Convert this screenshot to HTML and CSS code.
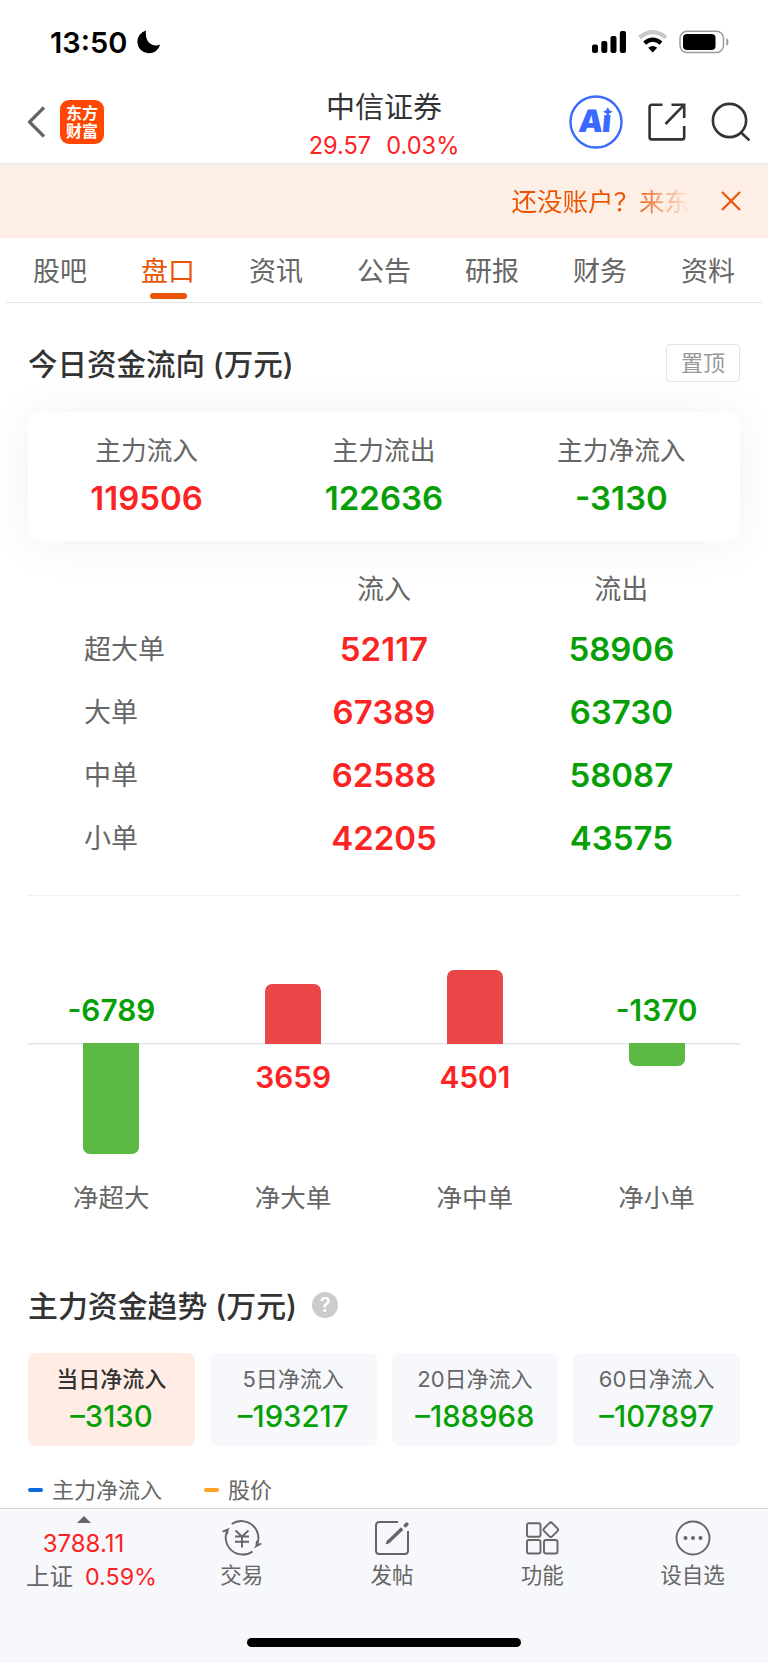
FILE: index.html
```html
<!DOCTYPE html>
<html lang="zh-CN">
<head>
    <meta charset="UTF-8">
    <title>中信证券</title>
    <link rel="stylesheet" href="styles.css">
</head>
<body>
<div class="page">
    <!-- 状态栏 -->
    <div class="status">
        <span class="time">13:50</span>
        <svg class="moon" width="24" height="24" viewBox="0 0 24 24"><path d="M9 0.5A11.6 11.6 0 1 0 23.2 14.6C15 18 7.5 12 9 0.5Z"/></svg>
        <svg class="status-icons" width="138" height="24" viewBox="0 0 138 24">
            <rect x="0" y="14.5" width="6" height="8.5" rx="2"/>
            <rect x="9.3" y="11" width="6" height="12" rx="2"/>
            <rect x="18.5" y="6" width="6" height="17" rx="2"/>
            <rect x="27.8" y="1" width="6.2" height="22" rx="2"/>
            <path d="M47.5 7.6Q60.8 -3.2 74 7.6" fill="none" stroke="#c8c8c8" stroke-width="4.2"/>
            <path d="M52.6 13.2Q60.8 6 69 13.2" fill="none" stroke="#000" stroke-width="4.2"/>
            <path d="M56.2 17.8Q60.8 14.4 65.2 17.8L60.7 22.4Z"/>
            <rect x="88" y="1.2" width="43.5" height="21.3" rx="7" fill="none" stroke="#9a9a9a" stroke-width="1.5"/>
            <rect x="91" y="4" width="32.5" height="16" rx="4"/>
            <path d="M134.3 8Q136.5 9 136.5 12Q136.5 15 134.3 16Z" fill="#9a9a9a"/>
        </svg>
    </div>

    <!-- 顶部导航 -->
    <div class="header">
        <div class="header-left">
            <svg width="20" height="34" viewBox="0 0 20 34"><path d="M18 2.5L3.5 17L18 31.5" fill="none" stroke="#666" stroke-width="3.2" stroke-linejoin="round"/></svg>
            <div class="logo"><span>东方</span><span>财富</span></div>
        </div>
        <div class="header-mid">
            <div class="name">中信证券</div>
            <div class="price"><span>29.57</span><span>0.03%</span></div>
        </div>
        <div class="header-right">
            <svg width="54" height="54" viewBox="0 0 54 54">
                <!-- i 的点换成星形 -->
                <clipPath id="ai-clip"><path d="M0 0H32V20H54V54H0Z"/></clipPath>
                <circle cx="27" cy="27" r="25.5" fill="none" stroke="#3a6aff" stroke-width="2.4"/>
                <g clip-path="url(#ai-clip)">
                    <text class="ai" x="9" y="37.3" transform="skewX(-5) translate(3 0)">Ai</text>
                </g>
                <path d="M38.8 12L40.4 15.2L43.6 16.8L40.4 18.4L38.8 21.6L37.2 18.4L34 16.8L37.2 15.2Z" fill="#3a6aff"/>
            </svg>
            <svg width="38" height="38" viewBox="0 0 38 38" fill="none" stroke="#333" stroke-width="2.6">
                <path d="M14.5 1.8H3.8Q1.6 1.8 1.6 4V34.2Q1.6 36.4 3.8 36.4H34Q36.2 36.4 36.2 34.2V23"/>
                <path d="M23.5 1.8H36.2V15M35.8 2.2L17.5 21"/>
            </svg>
            <svg width="40" height="40" viewBox="0 0 40 40" fill="none" stroke="#333" stroke-width="2.6">
                <circle cx="18.5" cy="18.5" r="16.6"/>
                <path d="M30 30.5L38.4 38.4"/>
            </svg>
        </div>
    </div>

    <!-- 开户提示 -->
    <div class="banner">
        <div class="banner-text">还没账户？来东</div>
        <svg width="20" height="20" viewBox="0 0 20 20"><path d="M1 1L19 19M19 1L1 19" stroke="#ea5504" stroke-width="2.2"/></svg>
    </div>

    <div class="tabs">
        <div class="tab">股吧</div>
        <div class="tab active">盘口</div>
        <div class="tab">资讯</div>
        <div class="tab">公告</div>
        <div class="tab">研报</div>
        <div class="tab">财务</div>
        <div class="tab">资料</div>
    </div>

    <!-- 今日资金流向 -->
    <div class="content">
        <div class="title-row">
            <div class="title">今日资金流向 (万元)</div>
            <div class="pin">置顶</div>
        </div>

        <div class="card">
            <div class="card-item">
                <p>主力流入</p>
                <b class="red">119506</b>
            </div>
            <div class="card-item">
                <p>主力流出</p>
                <b class="green">122636</b>
            </div>
            <div class="card-item">
                <p>主力净流入</p>
                <b class="green">-3130</b>
            </div>
        </div>

        <div class="table">
            <div class="row row-head"><span></span><span>流入</span><span>流出</span></div>
            <div class="row"><span>超大单</span><b class="red">52117</b><b class="green">58906</b></div>
            <div class="row"><span>大单</span><b class="red">67389</b><b class="green">63730</b></div>
            <div class="row"><span>中单</span><b class="red">62588</b><b class="green">58087</b></div>
            <div class="row"><span>小单</span><b class="red">42205</b><b class="green">43575</b></div>
        </div>

        <!-- 净流入柱状图 -->
        <div class="chart">
            <div class="col">
                <div class="up"><b class="green">-6789</b></div>
                <div class="down"><div class="bar bar-green" style="height: 111px"></div></div>
                <p>净超大</p>
            </div>
            <div class="col">
                <div class="up"><div class="bar bar-red" style="height: 60px"></div></div>
                <div class="down"><b class="red">3659</b></div>
                <p>净大单</p>
            </div>
            <div class="col">
                <div class="up"><div class="bar bar-red" style="height: 74px"></div></div>
                <div class="down"><b class="red">4501</b></div>
                <p>净中单</p>
            </div>
            <div class="col">
                <div class="up"><b class="green">-1370</b></div>
                <div class="down"><div class="bar bar-green" style="height: 23px"></div></div>
                <p>净小单</p>
            </div>
        </div>

        <!-- 主力资金趋势 -->
        <div class="title-row trend-title">
            <div class="title">主力资金趋势 (万元)</div>
            <div class="help">?</div>
        </div>
        <div class="trend">
            <div class="trend-item on"><p>当日净流入</p><span>–3130</span></div>
            <div class="trend-item"><p>5日净流入</p><span>–193217</span></div>
            <div class="trend-item"><p>20日净流入</p><span>–188968</span></div>
            <div class="trend-item"><p>60日净流入</p><span>–107897</span></div>
        </div>
        <div class="legend">
            <div class="legend-item"><i class="blue"></i>主力净流入</div>
            <div class="legend-item"><i class="orange"></i>股价</div>
        </div>
    </div>

    <!-- 底部栏 -->
    <div class="footer">
        <div class="nav">
            <div class="index">
                <i class="arrow"></i>
                <div class="index-num">3788.11</div>
                <div class="index-name">上证<span>0.59%</span></div>
            </div>
            <div class="nav-item">
                <svg width="42" height="36" viewBox="0 0 42 36" fill="none" stroke="#666" stroke-width="1.9">
                    <path d="M10.8 4A17 17 0 0 1 35.3 26.2L40.2 23.5M35.3 26.2L36 21"/>
                    <path d="M31.6 31.4A17 17 0 0 1 6.7 9.6L1.6 11.6M6.7 9.6L6 14"/>
                    <path d="M14.5 10.5L21 16.5L27.5 10.5M21 16.5V27.5M14 16.5H28M14 21.8H28"/>
                </svg>
                <p>交易</p>
            </div>
            <div class="nav-item">
                <svg width="36" height="36" viewBox="0 0 36 36" fill="none" stroke="#666" stroke-width="2">
                    <path d="M24 2H5.5Q2 2 2 5.5V30.5Q2 34 5.5 34H30.5Q34 34 34 30.5V11"/>
                    <path d="M14.2 22L28.2 8.5" stroke-width="3.4"/>
                    <path d="M12.2 24L13.4 20.6L15.4 22.6Z" fill="#666" stroke-width="1"/>
                    <path d="M31.4 5.6L32.8 4.2" stroke-width="3.6" stroke-linecap="round"/>
                </svg>
                <p>发帖</p>
            </div>
            <div class="nav-item">
                <svg width="36" height="36" viewBox="0 0 36 36" fill="none" stroke="#666" stroke-width="1.9">
                    <rect x="3" y="3.2" width="13.5" height="13.5" rx="2"/>
                    <rect x="3" y="20" width="13.5" height="13.5" rx="2"/>
                    <rect x="20" y="20" width="13.5" height="13.5" rx="2"/>
                    <rect x="21" y="4" width="11.4" height="11.4" rx="2" transform="rotate(45 26.7 9.8)"/>
                </svg>
                <p>功能</p>
            </div>
            <div class="nav-item">
                <svg width="36" height="36" viewBox="0 0 36 36">
                    <circle cx="18" cy="18" r="16.5" fill="none" stroke="#666" stroke-width="1.9"/>
                    <g fill="#666"><circle cx="10.5" cy="18" r="2"/><circle cx="18" cy="18" r="2"/><circle cx="25.5" cy="18" r="2"/></g>
                </svg>
                <p>设自选</p>
            </div>
        </div>
        <div class="home-bar"></div>
    </div>
</div>
</body>
</html>
```
FILE: styles.css
```css
* {
    box-sizing: border-box;
}

body {
    margin: 0;
    background-color: #fff;
    font-family: Inter, "Noto Sans CJK SC", sans-serif;
    color: #666;
}

p {
    margin: 0;
}

b {
    font-weight: 600;
}

svg {
    display: block;
    flex: none;
}

.page {
    display: flex;
    flex-direction: column;
    width: 768px;
    height: 1663px;
    overflow: hidden;
}

.red {
    color: #fb2323;
}

.green {
    color: #06a006;
}

/* 状态栏 */
.status {
    display: flex;
    align-items: center;
    height: 83px;
    padding: 2px 38px 0 50px;
}

.time {
    width: 87px;
    font-size: 29px;
    font-weight: 600;
    color: #000;
}

.moon {
    margin-top: -1px;
}

.status-icons {
    margin-left: auto;
    margin-top: -1px;
}

/* 顶部导航 */
.header {
    display: grid;
    grid-template-columns: 1fr 200px 1fr;
    height: 82px;
    border-bottom: 2px solid #eeeeef;
}

.header-left {
    display: flex;
    align-items: center;
    gap: 14px;
    padding-left: 26px;
    padding-bottom: 2px;
}

.logo {
    display: flex;
    flex-direction: column;
    justify-content: center;
    width: 44px;
    height: 44px;
    border-radius: 9px;
    background-color: #ff4602;
    text-align: center;
    font-size: 16px;
    line-height: 18px;
    font-weight: 700;
    color: #fff;
}

.header-mid {
    text-align: center;
}

.name {
    height: 48px;
    padding-top: 1px;
    line-height: 48px;
    font-size: 29px;
    color: #333;
}

.price {
    display: flex;
    justify-content: center;
    gap: 15px;
    line-height: 30px;
    font-size: 23.6px;
    color: #fb2323;
}

.header-right {
    display: flex;
    justify-content: flex-end;
    align-items: center;
    gap: 25px;
    padding-right: 17.5px;
    padding-bottom: 2px;
}

.ai {
    font-size: 31px;
    font-weight: 900;
    letter-spacing: -1px;
    fill: #3a6aff;
}

/* 开户提示 */
.banner {
    display: flex;
    justify-content: flex-end;
    align-items: center;
    gap: 31px;
    height: 73px;
    padding-right: 27px;
    padding-bottom: 2px;
    background-color: #fdeee6;
}

.banner-text {
    margin-top: -2px;
    font-size: 25.5px;
    background: linear-gradient(to right, #ea5504 68%, #fdeee6);
    background-clip: text;
    -webkit-background-clip: text;
    color: transparent;
}

.tabs {
    display: flex;
    height: 65px;
    margin: 0 6px;
    border-bottom: 1px solid #e2e3e6;
}

.tab {
    display: flex;
    flex: 1;
    flex-direction: column;
    align-items: center;
    height: 64px;
    line-height: 68px;
    font-size: 27px;
}

.active {
    color: #ea5504;
}

.active::after {
    content: "";
    width: 37px;
    height: 6px;
    margin-top: -13px;
    border-radius: 3px;
    background-color: #ea5504;
}

.content {
    flex: 1;
    padding: 0 28px;
}

.title-row {
    display: flex;
    align-items: center;
    justify-content: space-between;
    height: 38px;
    margin-top: 41px;
}

.title {
    padding-top: 2px;
    line-height: 38px;
    font-size: 29.5px;
    font-weight: 500;
    color: #333;
}

.pin {
    width: 74px;
    height: 38px;
    border: 1.5px solid #e2e3e6;
    border-radius: 4px;
    line-height: 36px;
    text-align: center;
    font-size: 22px;
    color: #999;
}

.card {
    display: flex;
    height: 129px;
    margin-top: 30px;
    padding-top: 19px;
    border-radius: 14px;
    background-color: #fff;
    box-shadow: 0 2px 50px rgba(0, 0, 0, 0.06);
}

.card-item {
    flex: 1;
    text-align: center;
    font-size: 25.7px;
    line-height: 40px;
}

.card-item b {
    display: block;
    line-height: 55px;
    font-size: 33px;
}

.table {
    height: 355px;
    padding-top: 17px;
    border-bottom: 1px solid #eff0f2;
}

.row {
    display: grid;
    grid-template-columns: repeat(3, 1fr);
    height: 63px;
    line-height: 63px;
    text-align: center;
    font-size: 27px;
}

.row-head {
    height: 60px;
}

.row span:first-child {
    padding-left: 56px;
    text-align: left;
}

.row b {
    font-size: 33px;
}

/* 柱状图，轴线上下两部分 */
.chart {
    display: grid;
    grid-template-columns: repeat(4, 1fr);
    gap: 15px;
    margin-top: 47px;
    background: linear-gradient(#e3e5ea, #e3e5ea) 0 100px / 100% 1.5px no-repeat;
}

.col {
    text-align: center;
    font-size: 25.5px;
    line-height: 40px;
}

.up {
    display: flex;
    flex-direction: column;
    justify-content: flex-end;
    align-items: center;
    height: 101px;
}

.down {
    display: flex;
    flex-direction: column;
    align-items: center;
    height: 135px;
    margin-top: -1px;
}

.col b {
    line-height: 68px;
    font-size: 29.8px;
}

.bar {
    width: 56px;
}

.bar-green {
    border-radius: 0 0 7px 7px;
    background-color: #5bb944;
}

.bar-red {
    border-radius: 7px 7px 0 0;
    background-color: #eb4748;
}

.trend-title {
    justify-content: flex-start;
    gap: 15px;
    margin-top: 68px;
}

.trend-title .title {
    font-size: 29.9px;
}

.help {
    width: 26px;
    height: 26px;
    border-radius: 50%;
    background-color: #ccc;
    line-height: 26px;
    text-align: center;
    font-size: 20px;
    font-weight: 600;
    color: #fff;
}

.trend {
    display: grid;
    grid-template-columns: repeat(4, 1fr);
    gap: 15px;
    margin-top: 29px;
}

.trend-item {
    height: 93px;
    padding-top: 8px;
    border-radius: 7px;
    background-color: #f7f8fb;
    text-align: center;
    line-height: 36px;
    font-size: 22px;
}

.trend-item span {
    display: block;
    line-height: 40px;
    font-size: 29.3px;
    font-weight: 500;
    color: #06a006;
}

.on {
    background-color: #ffede5;
}

.on p {
    font-weight: 500;
    color: #333;
}

.legend {
    display: flex;
    gap: 42px;
    margin-top: 28px;
    line-height: 32px;
    font-size: 22px;
}

.legend-item {
    display: flex;
    align-items: center;
    gap: 9px;
}

.legend i {
    width: 15px;
    height: 4px;
    border-radius: 2px;
}

.blue {
    background-color: #0d6ade;
}

.orange {
    background-color: #ffa122;
}

/* 底部栏 */
.footer {
    flex: none;
    height: 155px;
    border-top: 1px solid #d5d9de;
    background-color: #f7f8fb;
}

.nav {
    display: grid;
    grid-template-columns: 167px repeat(4, 150.3px);
    height: 129px;
}

.index {
    display: flex;
    flex-direction: column;
    align-items: center;
    padding-top: 7px;
}

.arrow {
    border: 7px solid transparent;
    border-top-width: 0;
    border-bottom: 7px solid #666;
}

.index-num {
    margin-top: 4px;
    line-height: 34px;
    font-size: 24px;
    color: #fb2323;
}

.index-name {
    width: 167px;
    padding-left: 26px;
    line-height: 32px;
    font-size: 23.5px;
    white-space: nowrap;
}

.index-name span {
    margin-left: 12px;
    font-size: 23.3px;
    color: #fb2323;
}

.nav-item {
    display: flex;
    flex-direction: column;
    align-items: center;
    padding-top: 11px;
    padding-right: 1px;
    font-size: 21.5px;
    line-height: 32px;
}

.nav-item p {
    margin-top: 3px;
}

.home-bar {
    width: 274px;
    height: 9px;
    margin: 0 auto;
    border-radius: 5px;
    background-color: #000;
}
```
